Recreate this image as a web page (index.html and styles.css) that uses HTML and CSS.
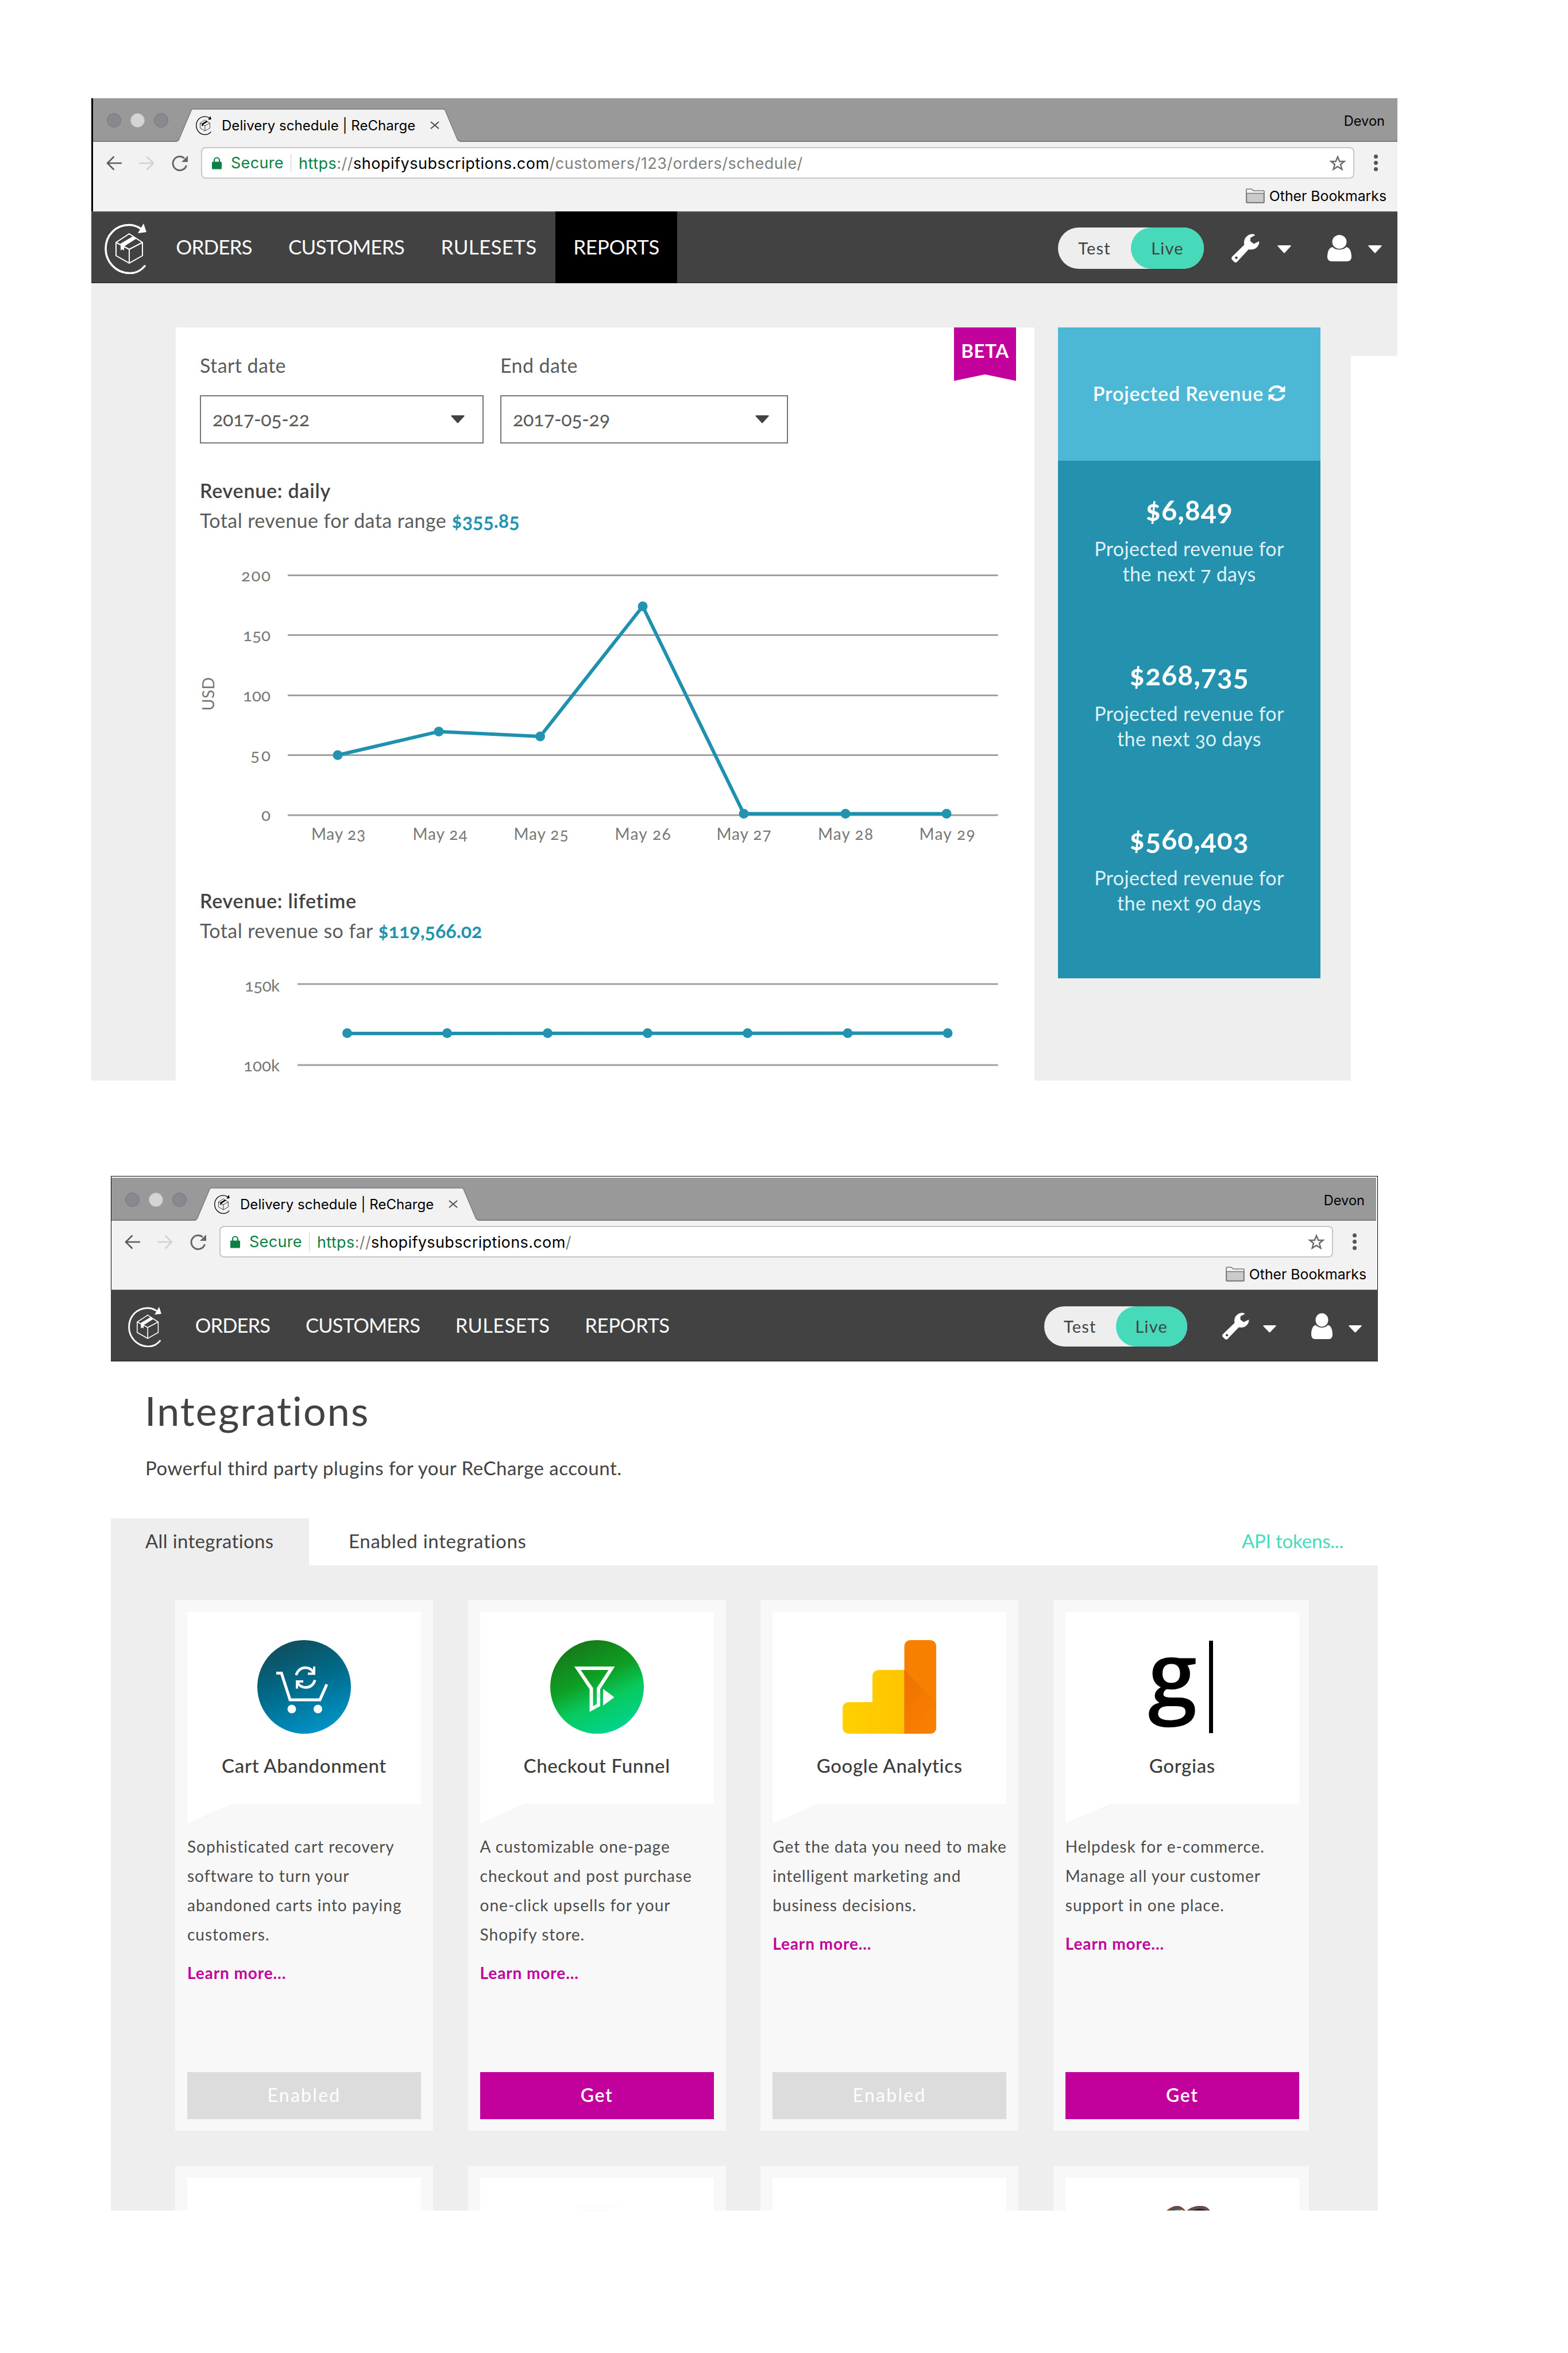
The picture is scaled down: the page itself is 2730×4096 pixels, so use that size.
FILE: index.html
```html
<!DOCTYPE html>
<html lang="en">
<head>
<meta charset="utf-8">
<title>Delivery schedule | ReCharge</title>
<link rel="stylesheet" href="styles.css">
</head>
<body>

<svg class="defs" width="0" height="0" aria-hidden="true">
  <symbol id="logo" viewBox="0 0 73 88" preserveAspectRatio="none">
    <path d="M71 73C63 83 53 87 43 86.500C19 86 2 66 2 44C2 20 20 2.500 43 2.500C50 2.500 57 5 63 9" fill="none" stroke="currentColor" stroke-width="3.600"/>
    <path d="M68 0L73 15L58 17Z" fill="currentColor"/>
    <path d="M43 18L66 33V56L43 69L20 56V33ZM20 33L43 45L66 33M43 45V69" fill="none" stroke="currentColor" stroke-width="2"/>
    <path d="M50 22L56 26L34 40V47L31 45L28 47V35Z" fill="currentColor"/>
  </symbol>
  <symbol id="wrench" viewBox="0 0 49 50" preserveAspectRatio="none">
    <path fill-rule="evenodd" d="M38 0.500C30 -0.500 22 6 22 15C22 17 22.300 18 22.500 19L2 39C-1 42 0 44 2 46L5 49C7 50.500 9 50 10.500 48L30 27C38 29 46 25 48 17C48.500 15.500 48.500 14 48 13L39 17.500L33 13V7L41 2.500C41 1.500 39.500 0.700 38 0.500ZM8.500 39.500a2.200 2.200 0 1 0 .01 0Z" fill="currentColor"/>
  </symbol>
  <symbol id="user" viewBox="0 0 42 46" preserveAspectRatio="none">
    <ellipse cx="21" cy="12" rx="12.500" ry="12" fill="currentColor"/>
    <path d="M9 21C14 27 28 27 33 21C39 22 42 29 42 38C42 43 39 46 34 46H8C3 46 0 43 0 38C0 29 3 22 9 21Z" fill="currentColor"/>
  </symbol>
  <symbol id="caret" viewBox="0 0 24 14" preserveAspectRatio="none">
    <path d="M1 0H23Q24 .5 23.500 1.500L13 13Q12 14 11 13L.5 1.500Q0 .5 1 0Z" fill="currentColor"/>
  </symbol>
  <symbol id="refresh" viewBox="0 0 30 29">
    <path d="M2.500 12C4 6 9 3 15 3C19 3 22 4.500 25 8M27.500 17C26 23 21 26 15 26C11 26 8 24.500 5 21" fill="none" stroke="currentColor" stroke-width="4.400"/>
    <path d="M29.500 1V12.500H18ZM.5 28V16.500H12Z" fill="currentColor"/>
  </symbol>
  <symbol id="back" viewBox="0 0 27 26">
    <path d="M27 13H2M13.500 1.500L2 13L13.500 24.500" fill="none" stroke="currentColor" stroke-width="2.600"/>
  </symbol>
  <symbol id="reload" viewBox="0 0 28 28">
    <path d="M25.500 18A12 12 0 1 1 22 5.500" fill="none" stroke="currentColor" stroke-width="3"/>
    <path d="M28 1V12H17Z" fill="currentColor"/>
  </symbol>
  <symbol id="lock" viewBox="0 0 17 22">
    <path d="M4 10V6a4.500 4.500 0 0 1 9 0V10" fill="none" stroke="currentColor" stroke-width="2"/>
    <rect y="8.500" width="17" height="13" rx="1.500" fill="currentColor"/>
  </symbol>
  <symbol id="star" viewBox="0 0 30 28">
    <path d="M15 3L18.300 11H26.500L20 16.200L22.400 24.800L15 20L7.600 24.800L10 16.200L3.500 11H11.700Z" fill="none" stroke="currentColor" stroke-width="2.400"/>
  </symbol>
  <symbol id="folder" viewBox="0 0 33 26">
    <path d="M1 24V2Q1 1 2 1H10L13 4H31Q32 4 32 5V24Q32 25 31 25H2Q1 25 1 24Z" fill="#f4f4f4" stroke="#777" stroke-width="1.600"/>
    <path d="M1.500 8.500H31.500V24.500H1.500Z" fill="#cbcbcb" stroke="#777" stroke-width="1.400"/>
  </symbol>
  <symbol id="close" viewBox="0 0 16 14" preserveAspectRatio="none">
    <path d="M1 1L15 13M15 1L1 13" stroke="currentColor" stroke-width="2.200"/>
  </symbol>
</svg>

<section class="window window--reports">
  <div class="browser">
    <div class="titlebar">
      <div class="lights"><i></i><i class="lit"></i><i></i></div>
      <div class="tab">
        <svg class="tab-shape" viewBox="0 0 493 58"><path d="M0 58L3 55L25 3Q26 1 28 1H464Q466 1 467 3L489 55L493 58Z" fill="#f2f2f2"/><path d="M0 57L3 55L25 3Q26 1 28 1H464Q466 1 467 3L489 55L493 57" fill="none" stroke="#7c7c7c" stroke-width="1.500"/></svg>
        <svg class="favicon"><use href="#logo"/></svg>
        <span class="tab-title">Delivery schedule | ReCharge</span>
        <svg class="tab-close"><use href="#close"/></svg>
      </div>
      <span class="profile">Devon</span>
    </div>
    <div class="toolbar">
      <svg class="ic-back"><use href="#back"/></svg>
      <svg class="ic-back ic-forward"><use href="#back"/></svg>
      <svg class="ic-reload"><use href="#reload"/></svg>
      <div class="omnibox">
        <svg class="ic-lock"><use href="#lock"/></svg>
        <span class="secure">Secure</span>
        <span class="url"><span class="scheme">https</span>://<b>shopifysubscriptions.com</b>/customers/123/orders/schedule/</span>
        <svg class="ic-star"><use href="#star"/></svg>
      </div>
      <div class="more"><i></i><i></i><i></i></div>
    </div>
    <div class="bookmarks"><svg class="ic-folder"><use href="#folder"/></svg><span>Other Bookmarks</span></div>
  </div>

  <nav class="nav">
    <svg class="logo"><use href="#logo"/></svg>
    <a class="link link-orders">ORDERS</a>
    <a class="link link-customers">CUSTOMERS</a>
    <a class="link link-rulesets">RULESETS</a>
    <a class="link link-reports active">REPORTS</a>
    <div class="toggle"><span class="test">Test</span><span class="live">Live</span></div>
    <svg class="wrench"><use href="#wrench"/></svg>
    <svg class="caret caret-tools"><use href="#caret"/></svg>
    <svg class="user"><use href="#user"/></svg>
    <svg class="caret caret-user"><use href="#caret"/></svg>
  </nav>

  <div class="content">
    <main class="reports">
      <div class="report-card">
        <div class="beta">BETA</div>
        <div class="dates">
          <div class="date date-start"><label>Start date</label><div class="select"><span>2017-05-22</span><svg><use href="#caret"/></svg></div></div>
          <div class="date date-end"><label>End date</label><div class="select"><span>2017-05-29</span><svg><use href="#caret"/></svg></div></div>
        </div>
        <h2 class="chart-title chart-title--first">Revenue: daily</h2>
        <p class="chart-total">Total revenue for data range <strong>$355.85</strong></p>
        <svg class="chart chart--daily" viewBox="306 926 1495 622">
          <g class="grid"><path d="M501 1001.500H1737.500M501 1105.500H1737.500M501 1210.500H1737.500M501 1314.500H1737.500M501 1419H1737.500"/></g>
          <g class="ylabels"><text x="471" y="1012" textLength="51">200</text><text x="471" y="1116" textLength="48">150</text><text x="471" y="1221" textLength="48">100</text><text x="471" y="1325" textLength="35">50</text><text x="471" y="1429">0</text></g>
          <text class="unit" transform="translate(373 1208) rotate(-90)" textLength="58">USD</text>
          <polyline class="series" points="588,1314.500 764,1273.500 940.500,1282 1119,1055.500 1295,1416.500 1472,1416.500 1648,1416.500"/>
          <g class="points"><circle cx="588" cy="1314.500" r="8.500"/><circle cx="764" cy="1273.500" r="8.500"/><circle cx="940.500" cy="1282" r="8.500"/><circle cx="1119" cy="1055.500" r="8.500"/><circle cx="1295" cy="1416.500" r="8.500"/><circle cx="1472" cy="1416.500" r="8.500"/><circle cx="1648" cy="1416.500" r="8.500"/></g>
          <g class="xlabels"><text x="589" y="1462" textLength="94">May 23</text><text x="766" y="1462" textLength="95">May 24</text><text x="942" y="1462" textLength="95">May 25</text><text x="1119" y="1462" textLength="97">May 26</text><text x="1295" y="1462" textLength="95">May 27</text><text x="1472" y="1462" textLength="96">May 28</text><text x="1649" y="1462" textLength="97">May 29</text></g>
        </svg>
        <h2 class="chart-title">Revenue: lifetime</h2>
        <p class="chart-total">Total revenue so far <strong>$119,566.02</strong></p>
        <svg class="chart chart--lifetime" viewBox="306 1640 1495 241">
          <g class="grid"><path d="M518 1713H1737.500M518 1854H1737.500"/></g>
          <g class="ylabels"><text x="487" y="1726" textLength="61">150k</text><text x="487" y="1865" textLength="63">100k</text></g>
          <path class="series" d="M604.500 1799L1650 1798.500"/>
          <g class="points"><circle cx="604.500" cy="1798.500" r="8.500"/><circle cx="778.500" cy="1798.500" r="8.500"/><circle cx="953.500" cy="1798.500" r="8.500"/><circle cx="1127.500" cy="1798.500" r="8.500"/><circle cx="1301.500" cy="1798.500" r="8.500"/><circle cx="1476" cy="1798.500" r="8.500"/><circle cx="1650" cy="1798.500" r="8.500"/></g>
        </svg>
      </div>
      <aside class="projection">
        <header>Projected Revenue <svg><use href="#refresh"/></svg></header>
        <div class="figures">
          <div class="figure"><b>$6,849</b><p>Projected revenue for<br>the next 7 days</p></div>
          <div class="figure"><b>$268,735</b><p>Projected revenue for<br>the next 30 days</p></div>
          <div class="figure"><b>$560,403</b><p>Projected revenue for<br>the next 90 days</p></div>
        </div>
      </aside>
    </main>
    <div class="strip"></div>
  </div>
</section>

<section class="window window--integrations">
  <div class="browser">
    <div class="titlebar">
      <div class="lights"><i></i><i class="lit"></i><i></i></div>
      <div class="tab">
        <svg class="tab-shape" viewBox="0 0 493 58"><path d="M0 58L3 55L25 3Q26 1 28 1H464Q466 1 467 3L489 55L493 58Z" fill="#f2f2f2"/><path d="M0 57L3 55L25 3Q26 1 28 1H464Q466 1 467 3L489 55L493 57" fill="none" stroke="#7c7c7c" stroke-width="1.500"/></svg>
        <svg class="favicon"><use href="#logo"/></svg>
        <span class="tab-title">Delivery schedule | ReCharge</span>
        <svg class="tab-close"><use href="#close"/></svg>
      </div>
      <span class="profile">Devon</span>
    </div>
    <div class="toolbar">
      <svg class="ic-back"><use href="#back"/></svg>
      <svg class="ic-back ic-forward"><use href="#back"/></svg>
      <svg class="ic-reload"><use href="#reload"/></svg>
      <div class="omnibox">
        <svg class="ic-lock"><use href="#lock"/></svg>
        <span class="secure">Secure</span>
        <span class="url"><span class="scheme">https</span>://<b>shopifysubscriptions.com</b>/</span>
        <svg class="ic-star"><use href="#star"/></svg>
      </div>
      <div class="more"><i></i><i></i><i></i></div>
    </div>
    <div class="bookmarks"><svg class="ic-folder"><use href="#folder"/></svg><span>Other Bookmarks</span></div>
  </div>

  <nav class="nav">
    <svg class="logo"><use href="#logo"/></svg>
    <a class="link link-orders">ORDERS</a>
    <a class="link link-customers">CUSTOMERS</a>
    <a class="link link-rulesets">RULESETS</a>
    <a class="link link-reports">REPORTS</a>
    <div class="toggle"><span class="test">Test</span><span class="live">Live</span></div>
    <svg class="wrench"><use href="#wrench"/></svg>
    <svg class="caret caret-tools"><use href="#caret"/></svg>
    <svg class="user"><use href="#user"/></svg>
    <svg class="caret caret-user"><use href="#caret"/></svg>
  </nav>

  <header class="page-head">
    <h1>Integrations</h1>
    <p>Powerful third party plugins for your ReCharge account.</p>
    <div class="tabs">
      <a class="page-tab selected">All integrations</a>
      <a class="page-tab tab-enabled">Enabled integrations</a>
      <a class="api">API tokens...</a>
    </div>
  </header>

  <div class="cards">
    <article class="card">
      <div class="card-head">
        <svg class="app-icon" viewBox="0 0 163 163">
          <linearGradient id="cart-fill" x1=".25" y1="0" x2=".65" y2="1"><stop offset="0" stop-color="#104c5a"/><stop offset=".5" stop-color="#006c8c"/><stop offset="1" stop-color="#0094c8"/></linearGradient>
          <circle cx="81.500" cy="81.500" r="81.500" fill="url(#cart-fill)"/>
          <path d="M33 57.500H42L57 104H109L121 77" fill="none" stroke="#fff" stroke-width="5"/>
          <circle cx="60" cy="120" r="7.500" fill="#fff"/><circle cx="105.500" cy="120" r="7.500" fill="#fff"/>
          <path d="M67.500 61C71 51 78 48 84 48C90 48 95 51 98 57M100.500 69.500C97 80 90 82.500 84 82.500C78 82.500 73 79.500 70 74" fill="none" stroke="#fff" stroke-width="4.500"/>
          <path d="M97 46H101V60.500H88V56.500H97ZM71 84.500H67V70H80V74H71Z" fill="#fff"/>
        </svg>
        <h3>Cart Abandonment</h3>
      </div>
      <p>Sophisticated cart recovery<br>software to turn your<br>abandoned carts into paying<br>customers.</p>
      <a class="more-link">Learn more...</a>
      <div class="button disabled">Enabled</div>
    </article>
    <article class="card">
      <div class="card-head">
        <svg class="app-icon" viewBox="0 0 163 163">
          <linearGradient id="funnel-fill" x1=".25" y1="0" x2=".7" y2="1"><stop offset="0" stop-color="#177518"/><stop offset=".42" stop-color="#0da024"/><stop offset=".65" stop-color="#08c95c"/><stop offset="1" stop-color="#00d592"/></linearGradient>
          <circle cx="81.500" cy="81.500" r="81.500" fill="url(#funnel-fill)"/>
          <path d="M47.500 49H107L84 84.500V113L71.500 120V84.500Z" fill="none" stroke="#fff" stroke-width="6"/>
          <path d="M92 85V114L111.500 99.500Z" fill="#fff"/>
        </svg>
        <h3>Checkout Funnel</h3>
      </div>
      <p>A customizable one-page<br>checkout and post purchase<br>one-click upsells for your<br>Shopify store.</p>
      <a class="more-link">Learn more...</a>
      <div class="button">Get</div>
    </article>
    <article class="card">
      <div class="card-head">
        <svg class="app-icon" viewBox="0 0 163 163">
          <linearGradient id="bars-fill"><stop offset="0" stop-color="#ffd100"/><stop offset="1" stop-color="#ffc400"/></linearGradient>
          <linearGradient id="shade-fill" x1="0" y1="0" x2=".6" y2="1"><stop offset="0" stop-color="#ee7100"/><stop offset="1" stop-color="#f88000"/></linearGradient>
          <path d="M12 108H52V64Q52 52 64 52H110V163H12Q0 163 0 151V120Q0 108 12 108Z" fill="url(#bars-fill)"/>
          <path d="M107.500 163V12Q107.500 0 119.500 0H151Q163 0 163 12V151Q163 163 151 163Z" fill="#f88000"/>
          <path d="M107.500 52L163 108V151Q163 163 151 163H107.500Z" fill="url(#shade-fill)"/>
        </svg>
        <h3>Google Analytics</h3>
      </div>
      <p>Get the data you need to make<br>intelligent marketing and<br>business decisions.</p>
      <a class="more-link">Learn more...</a>
      <div class="button disabled">Enabled</div>
    </article>
    <article class="card">
      <div class="card-head">
        <div class="app-icon gorgias"><span>g</span><i></i></div>
        <h3>Gorgias</h3>
      </div>
      <p>Helpdesk for e-commerce.<br>Manage all your customer<br>support in one place.</p>
      <a class="more-link">Learn more...</a>
      <div class="button">Get</div>
    </article>
    <article class="card"><div class="card-head"></div></article>
    <article class="card"><div class="card-head"><svg class="app-icon" viewBox="0 0 163 163"><path d="M42 0H123V1.500H42Z" fill="#fafafa"/><path d="M55 7.500H97V10H55Z" fill="#e2f1f0"/></svg></div></article>
    <article class="card"><div class="card-head"></div></article>
    <article class="card"><div class="card-head"><svg class="app-icon" viewBox="0 0 163 163">
      <path d="M53 9C62 1 70 -1 75 0C81 1 85 6 88 9C96 2 106 -1 114 0C121 0 127 3 130 9V14H53Z" fill="#6b4b45"/>
      <path d="M65 9C70 6 76 6 80 7L79 12H65Z" fill="#35a9dc"/><path d="M77 9Q80 4 84 9V12H77Z" fill="#fcc52e"/>
      <path d="M98 9C106 4 118 4 124 9V12H98Z" fill="#141d33"/></svg></div></article>
  </div>
</section>

</body>
</html>
```
FILE: styles.css
```css
* { box-sizing: border-box; }
body {
  margin: 0;
  padding-top: 171px;
  background: #fff;
  color: #424242;
  font-family: Lato, "Open Sans", sans-serif;
  font-variant-numeric: oldstyle-nums;
}
h1, h2, h3, p { margin: 0; font-weight: 400; }
svg { display: block; flex: none; }
.defs { position: absolute; }

.window { display: flex; flex-direction: column; }
.window--reports { margin-left: 159px; width: 2274px; height: 1710px; }
.window--integrations { margin: 166px 0 0 193px; width: 2206px; height: 1801px; }

/* browser chrome */
.browser {
  display: flex;
  flex-direction: column;
  flex: none;
  height: 197px;
  border-left: 3px solid #000;
  background: #f2f2f2;
  color: #000;
  font-family: Inter, sans-serif;
  font-variant-numeric: normal;
}
.window--integrations .browser {
  height: 198px;
  border: 1px solid #000;
  border-bottom: 0;
  padding: 2px 2px 0 0;
  background: linear-gradient(#f2f2f2, #f2f2f2) content-box, #fff;
}
.titlebar {
  display: flex;
  align-items: center;
  flex: none;
  height: 76px;
  padding: 3px 22px 0 24px;
  border-bottom: 2px solid #7c7c7c;
  background: #999;
}
.window--integrations .titlebar { height: 75px; padding-right: 20px; }
.lights { display: flex; gap: 16px; }
.lights i { width: 25px; height: 25px; border: 1.500px solid #77777c; border-radius: 50%; background: #89888f; }
.lights .lit { border-color: #bbb; background: #d4d4d4; }
.tab {
  position: relative;
  display: flex;
  align-items: center;
  align-self: flex-end;
  width: 493px;
  height: 58px;
  margin: 0 0 -2px 15px;
  padding-left: 33px;
}
.tab-shape { position: absolute; left: 0; top: 0; width: 493px; height: 58px; }
.favicon { position: relative; width: 27px; height: 33px; }
.tab-title { position: relative; width: 340px; margin-left: 18px; font-size: 24px; letter-spacing: .05px; white-space: nowrap; }
.tab-close { position: relative; width: 16px; height: 14px; margin-left: 23px; color: #555; }
.profile { margin: 2px 0 0 auto; font-size: 23.600px; }

.toolbar { display: flex; align-items: center; flex: none; height: 64px; padding: 9px 0 0 23px; color: #5c5c5c; }
.ic-back { width: 27px; height: 26px; }
.ic-forward { margin-left: 30px; color: #d2d2d2; transform: scaleX(-1); }
.ic-reload { width: 28px; height: 28px; margin-left: 30px; color: #666; }
.omnibox {
  display: flex;
  align-items: center;
  flex: 1;
  height: 55px;
  margin-left: 23px;
  padding: 1px 12px 0 17px;
  border: 2px solid #c6c6c6;
  border-radius: 8px;
  background: #fff;
  font-size: 27px;
}
.ic-lock { width: 17px; height: 22px; color: #0b8043; }
.secure { width: 105px; margin-left: 16px; border-right: 1.500px solid #ccc; color: #0b8043; line-height: 32px; letter-spacing: .3px; }
.url { margin-left: 13px; color: #808080; letter-spacing: .5px; white-space: nowrap; }
.window--integrations .url { letter-spacing: .38px; }
.url b { color: #000; font-weight: 400; }
.scheme { color: #0b8043; }
.ic-star { width: 30px; height: 28px; margin-left: auto; color: #6a6a6a; }
.more { display: flex; flex-direction: column; align-items: center; gap: 4px; width: 75px; }
.more i { width: 7px; height: 7px; border-radius: 50%; background: #555; }
.bookmarks {
  display: flex;
  align-items: center;
  justify-content: flex-end;
  gap: 8px;
  flex: 1;
  padding: 2px 19px 0 0;
  font-size: 24.800px;
}
.window--integrations .bookmarks { padding-right: 17px; }
.ic-folder { width: 33px; height: 26px; }

/* application navigation */
.nav {
  display: flex;
  align-items: center;
  flex: none;
  height: 125px;
  padding: 0 27px 0 23px;
  border-top: 2px solid #4c4e4d;
  border-bottom: 2px solid #343434;
  background: #424242;
  color: #fff;
}
.logo { width: 73px; height: 88px; margin-right: 21px; position: relative; top: 2px; }
.link {
  display: flex;
  align-items: center;
  justify-content: center;
  height: 125px;
  margin-right: 2px;
  padding-bottom: 4px;
  font-size: 35px;
  color: #fafafa;
}
.link-orders { width: 193px; letter-spacing: -.9px; }
.link-customers { width: 264px; letter-spacing: -.8px; }
.link-rulesets { width: 228px; letter-spacing: .3px; }
.link-reports { width: 212px; letter-spacing: -.3px; }
.link.active { background: #000; }
.toggle {
  display: flex;
  width: 254px;
  height: 72px;
  margin-left: auto;
  border-radius: 36px;
  background: #eee;
  color: #424242;
  font-size: 29px;
  line-height: 72px;
  letter-spacing: 1.200px;
  text-align: center;
}
.toggle, .wrench, .user { position: relative; top: 1px; }
.test { width: 127px; }
.live { width: 127px; border-radius: 36px; background: #46dabb; }
.wrench { width: 49px; height: 50px; margin-left: 48px; }
.caret { width: 24px; height: 14px; }
.caret-tools { margin: 6px 0 0 31px; }
.user { width: 42px; height: 46px; margin-left: 63px; }
.caret-user { margin: 6px 0 0 29px; }

.window--integrations .nav { padding: 0 28px 0 30px; }
.window--integrations .logo { width: 58px; height: 70px; margin-right: 29px; }
.window--integrations .link { padding-bottom: 2px; font-size: 34.500px; }
.window--integrations .link-orders { width: 190px; }
.window--integrations .link-customers { width: 259px; }
.window--integrations .link-rulesets { width: 224px; }
.window--integrations .link-reports { width: 206px; }
.window--integrations .toggle { width: 249px; height: 70px; line-height: 70px; }
.window--integrations .wrench { width: 47px; height: 47px; margin-left: 61px; }
.window--integrations .caret { width: 23px; height: 13px; margin-top: 12px; }
.window--integrations .caret-tools { margin-left: 24px; }
.window--integrations .user { width: 37px; height: 45px; margin-left: 61px; }
.window--integrations .caret-user { margin-left: 28px; }

/* revenue reports */
.content { display: flex; flex: 1; }
.reports { display: flex; gap: 41px; width: 2193px; padding: 77px 0 0 147px; background: #eee; }
.strip { width: 81px; height: 127px; background: #eee; }
.report-card { position: relative; display: flex; flex-direction: column; width: 1495px; padding: 46px 0 0 42px; background: #fff; }
.beta {
  position: absolute;
  right: 32px;
  top: 0;
  width: 108px;
  height: 93px;
  background: #c2009b;
  clip-path: polygon(0 0, 100% 0, 100% 100%, 50% 88%, 0 100%);
  color: #fff;
  font-size: 33px;
  font-weight: 700;
  line-height: 81px;
  letter-spacing: .6px;
  text-align: center;
}
.dates { display: flex; gap: 29px; }
.date { display: flex; flex-direction: column; gap: 32px; width: 494px; }
.date-end { width: 501px; }
.date label { font-size: 34px; line-height: 40px; letter-spacing: .4px; color: #5a5a5a; }
.select {
  display: flex;
  align-items: center;
  justify-content: space-between;
  height: 84px;
  padding: 0 31px 0 20px;
  border: 2px solid #767676;
  color: #5a5a5a;
  font-size: 34px;
  letter-spacing: -.35px;
}
.select span { padding-bottom: 4px; }
.select svg { width: 24px; height: 14px; color: #424242; }
.chart-title { font-size: 34px; font-weight: 600; line-height: 40px; letter-spacing: .75px; color: #424242; }
.chart-title--first { margin-top: 62px; }
.chart-total { margin-top: 12px; font-size: 34px; line-height: 40px; letter-spacing: .42px; color: #5c5c5c; }
.chart-total strong { color: #2493af; font-weight: 700; letter-spacing: 0; }
.chart { width: 1495px; margin-left: -42px; }
.chart--daily { height: 622px; }
.chart--lifetime { height: 241px; }
.grid path { stroke: #a0a0a0; stroke-width: 3; }
.series { fill: none; stroke: #1f90ae; stroke-width: 6; }
.points { fill: #2493af; }
.chart text { font-size: 28px; fill: #777; }
.chart .ylabels text { font-size: 29.500px; }
.ylabels { text-anchor: end; }
.xlabels, .unit { text-anchor: middle; }

.projection { width: 457px; height: 1133px; color: #fff; text-align: center; }
.projection header {
  display: flex;
  align-items: center;
  justify-content: center;
  gap: 8px;
  height: 232px;
  padding-bottom: 4px;
  background: #4db8d6;
  font-size: 34px;
  font-weight: 600;
  letter-spacing: .9px;
}
.projection header svg { width: 30px; height: 29px; }
.figures { display: flex; flex-direction: column; gap: 122.500px; height: 901px; padding-top: 55px; background: #2491ae; }
.figure b { display: block; font-size: 50px; font-weight: 700; line-height: 60px; letter-spacing: 1px; }
.figure p { margin-top: 16px; font-size: 34px; line-height: 44px; letter-spacing: .35px; color: #dff1f5; }

/* integrations */
.page-head { display: flex; flex-direction: column; flex: none; height: 355px; padding-top: 40px; }
.page-head h1 { padding-left: 59px; font-size: 70px; line-height: 90px; letter-spacing: 2.100px; }
.page-head p { margin-top: 35px; padding-left: 60px; font-size: 33px; line-height: 40px; letter-spacing: .5px; }
.tabs { display: flex; margin-top: auto; height: 82px; font-size: 33px; line-height: 78px; letter-spacing: .7px; }
.page-tab.selected { width: 345px; padding-left: 60px; background: #eee; letter-spacing: .35px; }
.tab-enabled { padding-left: 69px; }
.api { margin-left: auto; padding-right: 60px; color: #46dbbb; letter-spacing: -.2px; }

.cards {
  display: grid;
  grid-template-columns: 449px 449px 449px 445px;
  grid-auto-rows: 924px;
  gap: 61px 60.600px;
  flex: 1;
  min-height: 0;
  overflow: hidden;
  padding: 60px 0 0 112px;
  background: #eee;
}
.card { display: flex; flex-direction: column; padding: 21px 21px 20px; background: #f8f8f8; }
.card:nth-child(4n) { padding-right: 17px; }
.card-head { position: relative; height: 334px; flex: none; padding-top: 49px; background: #fff; }
.card-head::after {
  content: "";
  position: absolute;
  left: 0;
  top: 100%;
  width: 78px;
  height: 34px;
  background: #fff;
  clip-path: polygon(0 0, 100% 0, 0 100%);
}
.app-icon { width: 163px; height: 163px; margin: 0 auto; }
.card-head h3 { margin-top: 35px; font-size: 33px; font-weight: 500; line-height: 40px; letter-spacing: .65px; text-align: center; color: #3c3c3c; }
.card p { margin-top: 49px; font-size: 28px; line-height: 51px; letter-spacing: 1px; color: #4c4c4c; white-space: nowrap; }
.more-link { margin-top: 16px; color: #c2009b; font-size: 28px; font-weight: 700; line-height: 51px; letter-spacing: .9px; }
.button {
  height: 82px;
  margin-top: auto;
  background: #c2009b;
  color: #fff;
  font-size: 32px;
  font-weight: 600;
  line-height: 79px;
  letter-spacing: 1.600px;
  text-align: center;
}
.button.disabled { background: #dcdcdc; font-weight: 400; letter-spacing: 2.300px; }
.gorgias { display: flex; align-items: flex-start; padding-left: 22px; color: #000; }
.gorgias span { width: 106px; margin-top: -26px; font: 600 154px/163px "Open Sans", sans-serif; }
.gorgias i { width: 7px; height: 161px; margin-top: 1px; background: #000; }
```
